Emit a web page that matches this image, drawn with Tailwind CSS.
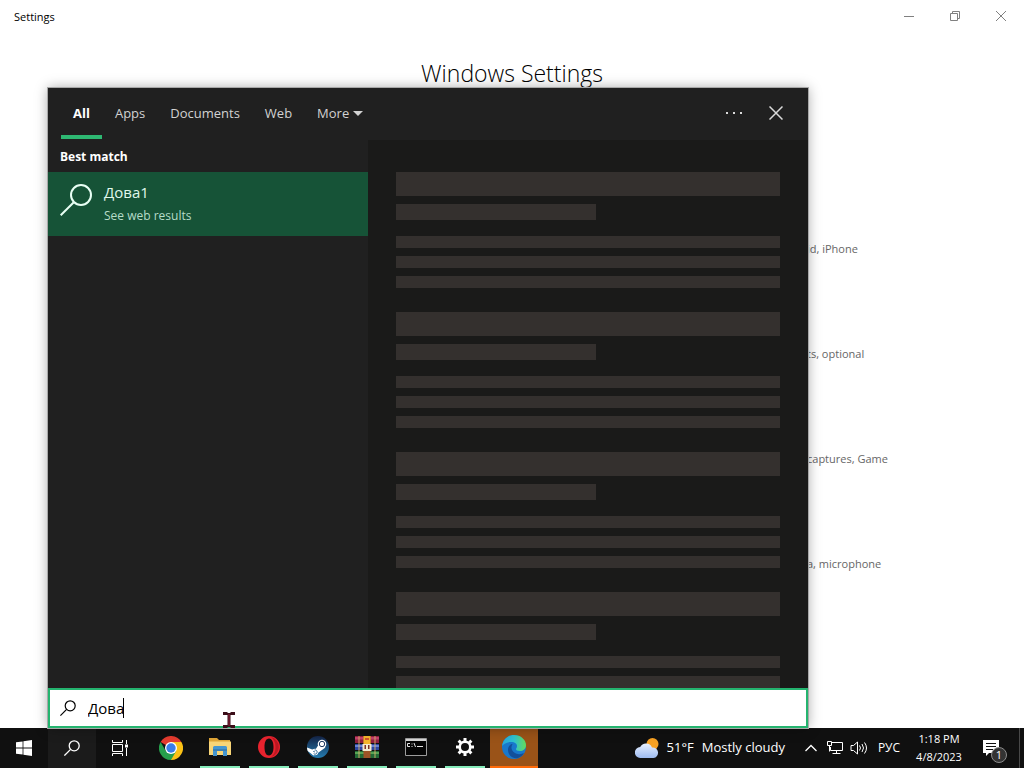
<!DOCTYPE html>
<html lang="en">

<head>
    <meta charset="UTF-8">
    <meta name="viewport" content="width=device-width, initial-scale=1.0">
    <title>Settings</title>
    <script src="https://cdn.jsdelivr.net/npm/@tailwindcss/browser@4"></script>
</head>

<body class="h-screen flex flex-col overflow-hidden bg-white font-['Open_Sans','Noto_Sans',sans-serif] text-[13px]">
    <!-- Settings window -->
    <main class="relative flex-1 min-h-0">
        <header class="flex justify-between items-start h-8 pl-3.5 text-[11px]">
            <span class="leading-[34px]">Settings</span>
            <div class="flex text-[#808080]">
                <button aria-label="Minimize" class="w-[46px] h-8 flex items-center justify-center">
                    <svg class="size-3" viewBox="0 0 12 12" stroke="currentColor"><path d="M1 6.500h10" /></svg>
                </button>
                <button aria-label="Restore" class="w-[46px] h-8 flex items-center justify-center">
                    <svg class="size-3" viewBox="0 0 12 12" fill="none" stroke="currentColor"><path d="M1.500 3.500h7v7h-7zM3.500 3.500v-2h7v7h-2" /></svg>
                </button>
                <button aria-label="Close" class="w-[46px] h-8 flex items-center justify-center">
                    <svg class="size-3" viewBox="0 0 12 12" stroke="currentColor"><path d="M1 1l10 10M11 1L1 11" /></svg>
                </button>
            </div>
        </header>
        <h1 class="mt-6 text-center text-[23px] leading-[34px] font-light">Windows Settings</h1>
        <ul class="ml-[807px] mt-[149px] flex flex-col gap-[85px] text-[11px] leading-5 text-[#666] whitespace-nowrap">
            <li>id, iPhone</li>
            <li>ts, optional</li>
            <li>captures, Game</li>
            <li>a, microphone</li>
        </ul>

        <!-- Search panel -->
        <section class="absolute left-12 top-[88px] bottom-0 w-[760px] flex flex-col bg-[#202020] text-[#d2d2d2] shadow-[0_0_0_1px_#a8a8a8,0_0_12px_rgba(0,0,0,0.35)]">
            <div class="flex justify-between items-start h-[52px] shrink-0 pl-[13px] pr-[11px]">
                <nav class="flex gap-px">
                    <button class="h-[51px] px-3 border-b-4 border-[#2eb872] pt-1 font-bold text-white">All</button>
                    <button class="h-[51px] px-3">Apps</button>
                    <button class="h-[51px] px-3">Documents</button>
                    <button class="h-[51px] px-3">Web</button>
                    <button class="h-[51px] px-3 flex items-center gap-1">More
                        <svg class="w-2.5 h-[5px]" viewBox="0 0 10 5" fill="currentColor"><path d="M0 0h10L5 5z" /></svg>
                    </button>
                </nav>
                <div class="flex text-[#dadada]">
                    <button aria-label="Options" class="w-[42px] h-[50px] flex items-center justify-center">
                        <svg class="w-4 h-2" viewBox="0 0 16 8" fill="currentColor"><path d="M0 3h2v2H0zM7 3h2v2H7zM14 3h2v2h-2z" /></svg>
                    </button>
                    <button aria-label="Close search" class="w-[42px] h-[50px] flex items-center justify-center">
                        <svg class="size-3.5" viewBox="0 0 14 14" stroke="currentColor" stroke-width="1.500"><path d="M.5.5l13 13M13.500.5l-13 13" /></svg>
                    </button>
                </div>
            </div>
            <div class="flex flex-1 min-h-0">
                <div class="w-80 shrink-0">
                    <h2 class="h-8 pl-3 leading-[34px] text-xs font-bold text-white">Best match</h2>
                    <button class="w-full h-16 flex items-start gap-3 px-3 pt-2 bg-[#165337] text-left">
                        <svg class="size-8 mt-1 text-[#e8fff4]" viewBox="0 0 32 32" fill="none" stroke="currentColor" stroke-width="2"><circle cx="21" cy="11" r="10" /><path d="M13.800 18.200L.7 31.300" /></svg>
                        <span class="flex flex-col">
                            <span class="text-[15px] leading-6 text-[#e0f8ec]">Дова1</span>
                            <span class="text-xs leading-6 text-[#b5dcc8]">See web results</span>
                        </span>
                    </button>
                </div>
                <div id="preview" class="flex-1 overflow-hidden bg-[#1a1a19] px-7 pt-8"></div>
            </div>
            <label class="relative flex items-center gap-3 h-10 shrink-0 px-2.5 bg-white border-2 border-[#24b46f] text-black">
                <svg class="size-4" viewBox="0 0 16 16" fill="none" stroke="currentColor" stroke-width="1.200"><circle cx="10.200" cy="5.800" r="5" /><path d="M6.600 9.400L.4 15.600" /></svg>
                <input type="text" aria-label="Search" value="Дова" class="flex-1 text-[15px] outline-none">
                <span class="absolute left-[73px] top-2 w-px h-5 bg-black"></span>
            </label>
        </section>
    </main>

    <!-- Mouse cursor -->
    <svg class="absolute left-[223px] top-[711px] w-3 h-[18px] z-10" viewBox="0 0 12 18" fill="none" stroke="#3a0d18" stroke-width="3"><path d="M0 2.500h4.500M7.500 2.500H12M6 2v14M0 15.500h4.500M7.500 15.500H12" /><path d="M6 3v12" stroke="#96243f" stroke-width="1" /></svg>

    <!-- Taskbar -->
    <footer class="flex justify-between h-10 shrink-0 bg-[#101010] text-white">
        <div class="flex">
            <button aria-label="Start" class="w-12 flex items-center justify-center">
                <svg class="size-4" viewBox="0 0 16 16" fill="currentColor"><path d="M0 2.300l6.600-.9v6.200H0zM7.400 1.300L16 0v7.600H7.400zM0 8.400h6.600v6.200L0 13.700zM7.400 8.400H16V16l-8.600-1.300z" /></svg>
            </button>
            <button aria-label="Search" class="w-12 flex items-center justify-center bg-[#1b1b1b]">
                <svg class="size-4" viewBox="0 0 16 16" fill="none" stroke="currentColor" stroke-width="1.300"><circle cx="10.200" cy="5.800" r="5" /><path d="M6.600 9.400L.4 15.600" /></svg>
            </button>
            <button aria-label="Task View" class="w-12 flex items-center justify-center">
                <svg class="size-4" viewBox="0 0 16 16" fill="none" stroke="currentColor"><path d="M.5 0v2.500h10V0M.5 16v-2.500h10V16M.5 4.500h10v7H.5zM14.500 0v4M14.500 8v8" /><path d="M13 4.500h3v3h-3z" fill="currentColor" stroke="none" /></svg>
            </button>
            <div class="flex gap-px pl-[3px]">
                <button aria-label="Chrome" class="w-12 flex items-center justify-center">
                    <svg class="size-6" viewBox="0 0 24 24">
                        <path d="M12 12L1.600 6A12 12 0 0 1 22.400 6z" fill="#e33b2e" />
                        <path d="M12 12V6h10.400A12 12 0 0 1 12 24z" fill="#fbc116" />
                        <path d="M12 24l5.200-9L12 12 6.800 15 1.600 6A12 12 0 0 0 12 24z" fill="#269f4c" />
                        <circle cx="12" cy="12" r="6" fill="#fff" />
                        <circle cx="12" cy="12" r="4.700" fill="#3b7de8" />
                    </svg>
                </button>
                <button aria-label="File Explorer" class="w-12 flex flex-col items-center">
                    <svg class="size-6 my-auto" viewBox="0 0 24 24">
                        <path d="M1 3h8l2 2h11v15H1z" fill="#dfa637" />
                        <path d="M1 6.500h22V20H1z" fill="#f8d577" />
                        <path d="M5 21v-8.500q0-1.500 1.500-1.500h11q1.500 0 1.500 1.500V21h-4v-5H9v5z" fill="#4596d0" />
                        <path d="M5 14h14v2H5z" fill="#397fb6" />
                    </svg>
                    <span class="w-10 h-0.5 bg-[#86ecbb]"></span>
                </button>
                <button aria-label="Opera" class="w-12 flex flex-col items-center">
                    <svg class="size-6 my-auto" viewBox="0 0 24 24">
                        <path fill-rule="evenodd" d="M12 1a11 11 0 1 0 0 22 11 11 0 0 0 0-22zM12 3.500c3 0 4.500 3.600 4.500 8.500s-1.500 8.500-4.500 8.500S7.500 17 7.500 12 9 3.500 12 3.500z" fill="#e8232e" />
                        <path d="M14 2a10.300 10.300 0 0 1 0 20c2.500-2 4.500-5 4.500-10S16.500 4 14 2z" fill="#bd1722" />
                    </svg>
                    <span class="w-10 h-0.5 bg-[#86ecbb]"></span>
                </button>
                <button aria-label="Steam" class="w-12 flex flex-col items-center">
                    <svg class="size-6 my-auto" viewBox="0 0 24 24">
                        <defs><linearGradient id="steam" x2="0" y2="1"><stop stop-color="#142346" /><stop offset="1" stop-color="#247cb0" /></linearGradient></defs>
                        <circle cx="12" cy="12" r="11" fill="url(#steam)" />
                        <path d="M1 12.500l6.500 2.500 2 -.5 3.500-5.500 6.500 3.500-7 5-2 1.500-3 1.500L1.700 16A11 11 0 0 1 1 12.500z" fill="#fff" />
                        <circle cx="16" cy="9" r="4.300" fill="#fff" />
                        <circle cx="16" cy="9" r="2.700" fill="#fff" stroke="#1b3860" />
                        <circle cx="9" cy="17" r="3.200" fill="#fff" />
                        <path d="M7.300 16.400l1.600.6M7.700 18.700a2.100 2.100 0 1 0 .9-3.700" fill="none" stroke="#2b6291" />
                    </svg>
                    <span class="w-10 h-0.5 bg-[#86ecbb]"></span>
                </button>
                <button aria-label="WinRAR" class="w-12 flex flex-col items-center">
                    <svg class="size-6 my-auto" viewBox="0 0 24 24">
                        <path d="M0 1h24v7H0z" fill="#8e1f3f" /><path d="M0 2h24v2.500H0z" fill="#c3426c" />
                        <path d="M0 9h24v6H0z" fill="#2d45a0" /><path d="M0 10h24v2H0z" fill="#6682d4" />
                        <path d="M0 16h24v7H0z" fill="#226b36" /><path d="M0 17h24v2H0z" fill="#59a353" />
                        <path d="M3 1h2v22H3zM19 1h2v22h-2z" fill="#d6b06a" opacity=".45" />
                        <path d="M8.500 1h7v22h-7z" fill="#9d5427" /><path d="M8.500 1h7v8h-7z" fill="#f4b52c" />
                        <path d="M10 3h4v2h-4z" fill="#d2552a" />
                        <path d="M7.500 9h9v7h-9z" fill="#f4ead0" /><path d="M9.500 10h1.500v4H9.500zM13 10h1.500v4H13z" fill="#7b3425" />
                    </svg>
                    <span class="w-10 h-0.5 bg-[#86ecbb]"></span>
                </button>
                <button aria-label="Command Prompt" class="w-12 flex flex-col items-center">
                    <svg class="size-6 my-auto" viewBox="0 0 24 24">
                        <path d="M1.500 3.500h21v17h-21z" fill="#050505" stroke="#9c9c9c" />
                        <path d="M2 4h20v2H2z" fill="#d5d5d5" />
                        <path d="M6 8.500H3.500v3H6M8 8.500v1M8 11v1M10 8l1.500 4M13 11.500h6" fill="none" stroke="#e5e5e5" />
                    </svg>
                    <span class="w-10 h-0.5 bg-[#86ecbb]"></span>
                </button>
                <button aria-label="Settings" class="w-12 flex flex-col items-center">
                    <svg class="size-5 my-auto" viewBox="0 0 20 20" fill="none" stroke="currentColor">
                        <circle cx="10" cy="10" r="5.300" stroke-width="2.600" />
                        <path d="M10 1v3M10 16v3M1 10h3M16 10h3M3.600 3.600l2.200 2.200M14.200 14.200l2.200 2.200M3.600 16.400l2.200-2.200M14.200 5.800l2.200-2.200" stroke-width="3" />
                    </svg>
                    <span class="w-10 h-0.5 bg-[#86ecbb]"></span>
                </button>
                <button aria-label="Edge" class="w-12 flex flex-col items-center bg-[#9a5318]">
                    <svg class="size-6 my-auto" viewBox="0 0 24 24">
                        <defs>
                            <linearGradient id="edgeTop"><stop stop-color="#27a5dd" /><stop offset=".5" stop-color="#2fc2cf" /><stop offset="1" stop-color="#65dc59" /></linearGradient>
                        </defs>
                        <circle cx="12" cy="12" r="12" fill="#1878cc" />
                        <path d="M0 11C1 4 6 0 12 0c7 0 12 5 12 10 0 4-3 6-6 6-3 0-4-1-4-2s1-1 1-3c0-2-2-4-6-4-5 0-8 3-9 4z" fill="url(#edgeTop)" />
                        <path d="M9.500 9C6 11 5 15 7 19s7 5 9 4c3-1 5-3 6-5-2 1-4 1.500-6 1-4-.6-7-4-6.500-7 .1-1 .5-2 1-3z" fill="#124f9a" />
                    </svg>
                    <span class="w-12 h-0.5 bg-[#ff6b0a]"></span>
                </button>
            </div>
        </div>
        <div class="flex items-center">
            <button class="flex items-center gap-2 mr-3.5 whitespace-nowrap">
                <svg class="w-6 h-5" viewBox="0 0 24 20">
                    <defs><linearGradient id="cloud" x2="0" y2="1"><stop stop-color="#e8f0ff" /><stop offset="1" stop-color="#9dbbf0" /></linearGradient></defs>
                    <circle cx="17.500" cy="6" r="6" fill="#f7a123" />
                    <path d="M5.500 20a5.500 5.500 0 0 1-.3-11A6.500 6.500 0 0 1 17 9.500 5.300 5.300 0 0 1 18.500 20z" fill="url(#cloud)" />
                </svg>
                <span>51°F</span>
                <span>Mostly cloudy</span>
            </button>
            <button aria-label="Show hidden icons" class="w-6 h-10 flex items-center justify-center">
                <svg class="w-3 h-2" viewBox="0 0 12 8" fill="none" stroke="currentColor" stroke-width="1.300"><path d="M.5 7L6 1.500 11.500 7" /></svg>
            </button>
            <button aria-label="Network" class="w-6 h-10 flex items-center justify-center">
                <svg class="size-4" viewBox="0 0 16 16" fill="none" stroke="currentColor"><path d="M5 2.500h10.500v8H3.500V7M9.500 10.500v3M5.500 13.500h8M.5 1.500h4v4h-4zM2.500 5.500v6" /></svg>
            </button>
            <button aria-label="Volume" class="w-6 h-10 flex items-center justify-center">
                <svg class="w-[18px] h-4" viewBox="0 0 18 16" fill="none" stroke="currentColor"><path d="M1 5.500h2.500L7.500 2v12L3.500 10.500H1zM9.500 5.500q2 2.500 0 5M12 4q3 4 0 8M14.500 2.500q4 5.500 0 11" /></svg>
            </button>
            <button class="w-9 text-xs">РУС</button>
            <button class="w-16 text-center text-[11px] leading-[18px]">1:18 PM<br>4/8/2023</button>
            <button aria-label="Notifications" class="relative w-12 h-10 flex items-center justify-center">
                <svg class="w-4 h-4 mr-2" viewBox="0 0 16 16"><path d="M0 0h16v13H6l-3 3v-3H0z" fill="currentColor" /><path d="M3 3.500h10M3 6.500h10M3 9.500h7" stroke="#101010" /></svg>
                <span class="absolute left-5 top-[19px] size-4 rounded-full border border-[#8c8c8c] bg-[#333] text-[11px] leading-3.5">1</span>
            </button>
            <span class="w-[5px] h-10 border-l border-[#484848]"></span>
        </div>
    </footer>

    <script>
        const preview = document.getElementById("preview");
        let blocks = '';
        for (let i = 0; i < 4; i++) {
            blocks += `
            <div class="flex flex-col gap-2 mb-6">
                <div class="h-6 bg-[#34302e]"></div>
                <div class="h-4 w-[200px] mb-2 bg-[#34302e]"></div>
                <div class="h-3 bg-[#34302e]"></div>
                <div class="h-3 bg-[#34302e]"></div>
                <div class="h-3 bg-[#34302e]"></div>
            </div>
            `;
        }
        preview.innerHTML = blocks;
    </script>
</body>

</html>
